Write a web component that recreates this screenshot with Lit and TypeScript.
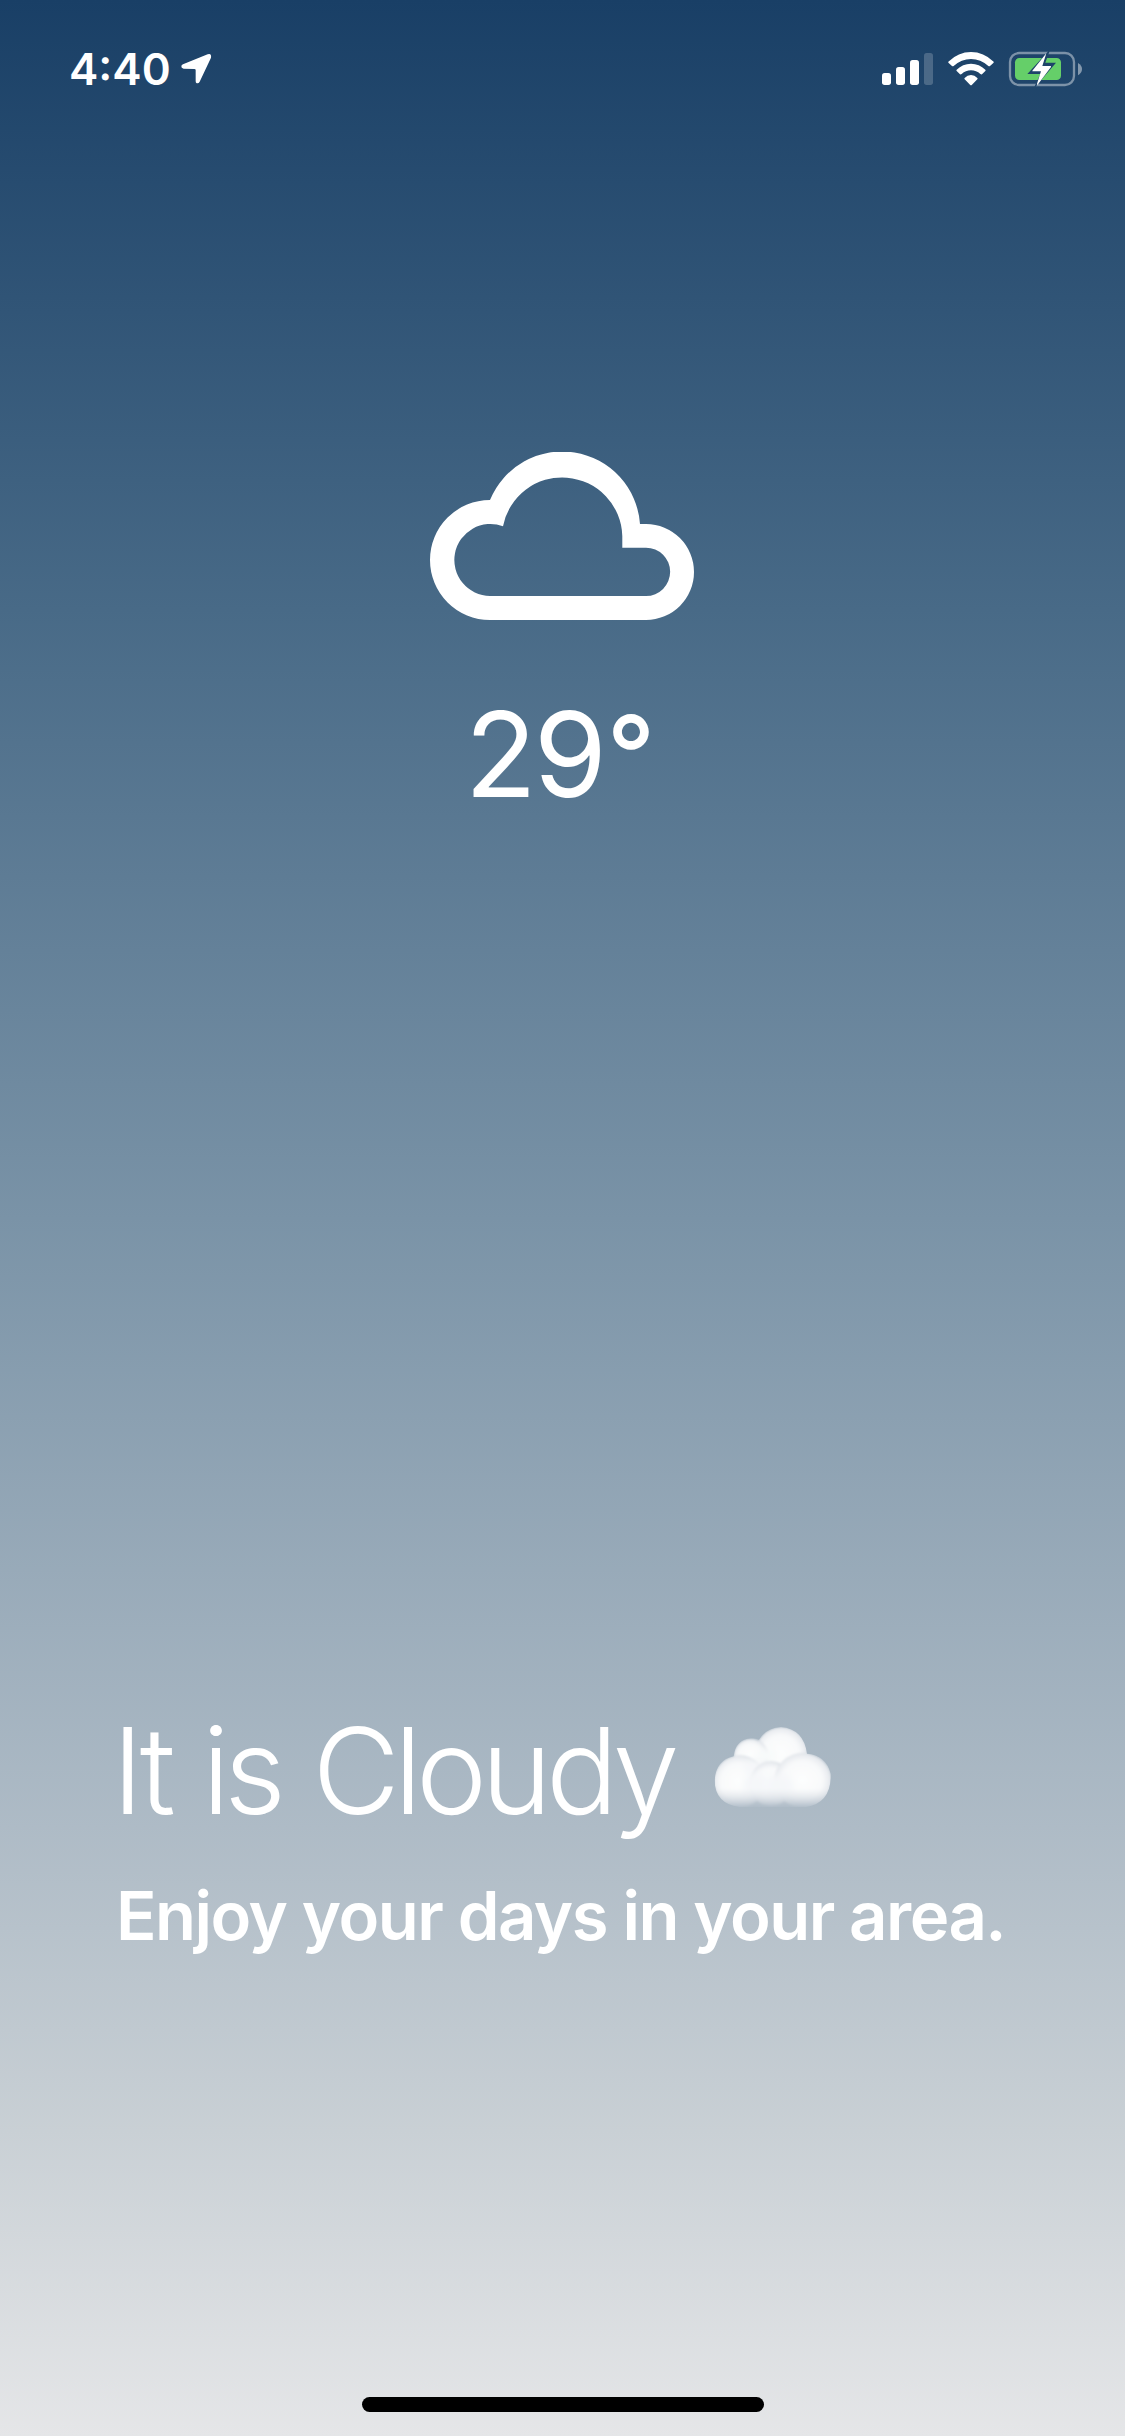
import { LitElement, html, css } from "lit";
import { customElement, property } from "lit/decorators.js";

@customElement("status-bar")
class StatusBar extends LitElement {
  @property() time = "4:40";

  static styles = css`
    :host {
      display: flex;
      justify-content: space-between;
      align-items: flex-start;
      box-sizing: border-box;
      height: 132px;
      padding: 42px 42px 0 69px;
    }
    .left {
      display: flex;
      align-items: flex-start;
    }
    .time {
      width: 112px;
      font-size: 44px;
      line-height: 54px;
      font-weight: 600;
      letter-spacing: 0;
      white-space: nowrap;
    }
    .arrow {
      width: 31px;
      height: 31px;
      margin-top: 11px;
    }
    .icons {
      width: 202px;
      height: 36px;
      margin-top: 9px;
    }
    svg {
      display: block;
    }
  `;

  render() {
    return html`
      <div class="left">
        <span class="time">${this.time}</span>
        <svg class="arrow" viewBox="393 69 93 93">
          <path
            d="M399 103 L473 73 Q485 69 483 83 L449 155 Q445 162 439 159 Q437 157 437 153 V120 Q437 117 433 117 L401 116 Q393 114 394 108 Q395 105 399 103 Z"
            fill="#fff"
          />
        </svg>
      </div>
      <svg class="icons" viewBox="63 63 606 108">
        <g fill="#fff">
          <rect x="66" y="129" width="27" height="36" rx="8" />
          <rect x="108" y="111" width="27" height="54" rx="8" />
          <rect x="150" y="90" width="27" height="75" rx="8" />
          <rect x="192" y="69" width="27" height="96" rx="8" fill-opacity=".2" />
          <path
            d="M265 95 Q295 66 333 66 Q371 66 401 95 Q402 97 400 99 L390 108 Q388 110 385 108 Q362 87 333 87 Q304 87 281 108 Q278 110 276 108 L266 99 Q264 97 265 95Z"
          />
          <path
            d="M290 119 Q308 101 333 101 Q358 101 376 119 Q378 121 376 123 L366 133 Q364 134 361 132 Q349 121 333 121 Q317 121 305 132 Q302 134 300 133 L290 123 Q288 121 290 119Z"
          />
          <path
            d="M314 144 Q322 135 333 135 Q344 135 352 144 Q354 146 352 148 L336 164 Q333 167 330 164 L314 148 Q312 146 314 144Z"
          />
        </g>
        <mask id="gap" maskUnits="userSpaceOnUse" x="440" y="60" width="230" height="114">
          <rect x="440" y="60" width="230" height="114" fill="#fff" />
          <path
            d="M571 57 L556 98 H588 L520 178 L541 132 H502 Z"
            fill="#000"
          />
        </mask>
        <g mask="url(#gap)">
          <rect
            x="450"
            y="69"
            width="192"
            height="96"
            rx="27"
            fill="none"
            stroke="#fff"
            stroke-opacity=".42"
            stroke-width="7"
          />
          <rect x="465" y="84" width="138" height="66" rx="13" fill="#65cf69" />
        </g>
        <path d="M654 99 Q666 106 666 117 Q666 129 654 136Z" fill="#fff" fill-opacity=".45" />
        <path d="M559 70 L517 122 Q516 124 519 124 H543 L531 161 Q530 167 534 163 L573 111 Q574 108 571 108 H547 Z" fill="#fff" />
      </svg>
    `;
  }
}

@customElement("app-root")
class AppRoot extends LitElement {
  @property({ type: Number }) temperature = 29;
  @property() headline = "It is Cloudy";
  @property() message = "Enjoy your days in your area.";

  static styles = css`
    :host {
      display: flex;
      flex-direction: column;
      box-sizing: border-box;
      width: 100%;
      height: 2436px;
      overflow: hidden;
      color: #fff;
      font-family: Inter, "Liberation Sans", sans-serif;
      background: linear-gradient(
        180deg,
        #193f66 0%,
        #486a87 25%,
        #7a93a7 50%,
        #aebbc6 75%,
        #c9d0d5 87.5%,
        #e5e6e8 100%
      );
    }
    .weather {
      display: flex;
      flex-direction: column;
      align-items: center;
      padding-top: 320px;
    }
    .cloud {
      display: block;
      width: 265px;
      height: 168px;
    }
    .temp {
      margin: 62px 8px 0 0;
      font-size: 118px;
      line-height: 144px;
      font-weight: 400;
      letter-spacing: -3px;
      white-space: nowrap;
    }
    .degree {
      margin-left: 3px;
      font-size: 106px;
      line-height: 0;
      font-weight: 500;
      vertical-align: 5px;
    }
    .text {
      margin: auto 0 440px 116px;
    }
    .title {
      display: flex;
      align-items: flex-start;
      font-size: 120px;
      line-height: 146px;
      font-weight: 300;
      white-space: nowrap;
    }
    .title-words {
      width: 601px;
      margin: 1px 0 -1px -4px;
      letter-spacing: -5.9px;
      word-spacing: 4.5px;
    }
    .emoji {
      width: 120px;
      height: 82px;
      margin-top: 29px;
    }
    .message {
      margin: 32px 0 0;
      font-size: 67px;
      line-height: 82px;
      font-weight: 600;
      letter-spacing: -1.52px;
      white-space: nowrap;
    }
    .home {
      flex: none;
      align-self: center;
      width: 402px;
      height: 15px;
      margin-bottom: 24px;
      border-radius: 8px;
      background: #000;
    }
  `;

  render() {
    return html`
      <status-bar></status-bar>
      <section class="weather">
        <svg class="cloud" viewBox="20 22 265 168">
          <path
            fill="#fff"
            fill-rule="evenodd"
            d="M80 70 A78 78 0 0 1 230 94 H236 A48 48 0 0 1 236 190 H80 A60 60 0 0 1 80 70 Z M93 96.3 A36 36 0 1 0 80 166 H236 A24 24 0 0 0 236 117.7 H212.3 V106 A60.2 60.2 0 0 0 93 96.3 Z"
          />
        </svg>
        <div class="temp">${this.temperature}<span class="degree">°</span></div>
      </section>
      <section class="text">
        <div class="title">
          <span class="title-words">${this.headline}</span>
          <svg class="emoji" viewBox="66 49 360 246">
            <defs>
              <radialGradient id="puff" cx=".48" cy=".5" r=".54">
                <stop offset="0" stop-color="#fdfefe" />
                <stop offset=".65" stop-color="#f8f9fa" />
                <stop offset=".86" stop-color="#e9ecf0" />
                <stop offset="1" stop-color="#c9d1d9" />
              </radialGradient>
              <linearGradient id="base" x1="0" y1="0" x2="0" y2="1">
                <stop offset="0" stop-color="#dfe3e8" stop-opacity="0" />
                <stop offset="1" stop-color="#adbac6" />
              </linearGradient>
              <clipPath id="body">
                <path
                  d="M128 140 Q134 89 180 86 Q194 84 204 90 Q226 54 270 52 Q338 58 348 132 Q405 136 419 192 Q422 280 345 292 H145 Q71 282 71 211 Q75 151 128 140Z"
                />
              </clipPath>
              <filter id="soft" x="-20%" y="-20%" width="140%" height="140%">
                <feGaussianBlur stdDeviation="2.5" />
              </filter>
              <filter id="blend" x="-60%" y="-60%" width="220%" height="220%">
                <feGaussianBlur stdDeviation="11" />
              </filter>
            </defs>
            <g clip-path="url(#body)" filter="url(#soft)">
              <ellipse cx="272" cy="134" rx="80" ry="82" fill="url(#puff)" />
              <ellipse cx="180" cy="138" rx="52" ry="51" fill="url(#puff)" />
              <ellipse cx="228" cy="138" rx="30" ry="26" fill="#f8fafa" filter="url(#blend)" />
              <ellipse cx="146" cy="215" rx="78" ry="78" fill="url(#puff)" />
              <ellipse cx="190" cy="170" rx="30" ry="22" fill="#f5f7f9" filter="url(#blend)" />
              <ellipse cx="240" cy="222" rx="64" ry="67" fill="url(#puff)" />
              <ellipse cx="337" cy="212" rx="87" ry="82" fill="url(#puff)" />
              <ellipse cx="194" cy="228" rx="36" ry="40" fill="#f5f7f9" filter="url(#blend)" />
              <ellipse cx="262" cy="232" rx="44" ry="40" fill="#f5f7f9" filter="url(#blend)" />
              <rect x="67" y="236" width="356" height="60" fill="url(#base)" />
            </g>
          </svg>
        </div>
        <p class="message">${this.message}</p>
      </section>
      <div class="home"></div>
    `;
  }
}
